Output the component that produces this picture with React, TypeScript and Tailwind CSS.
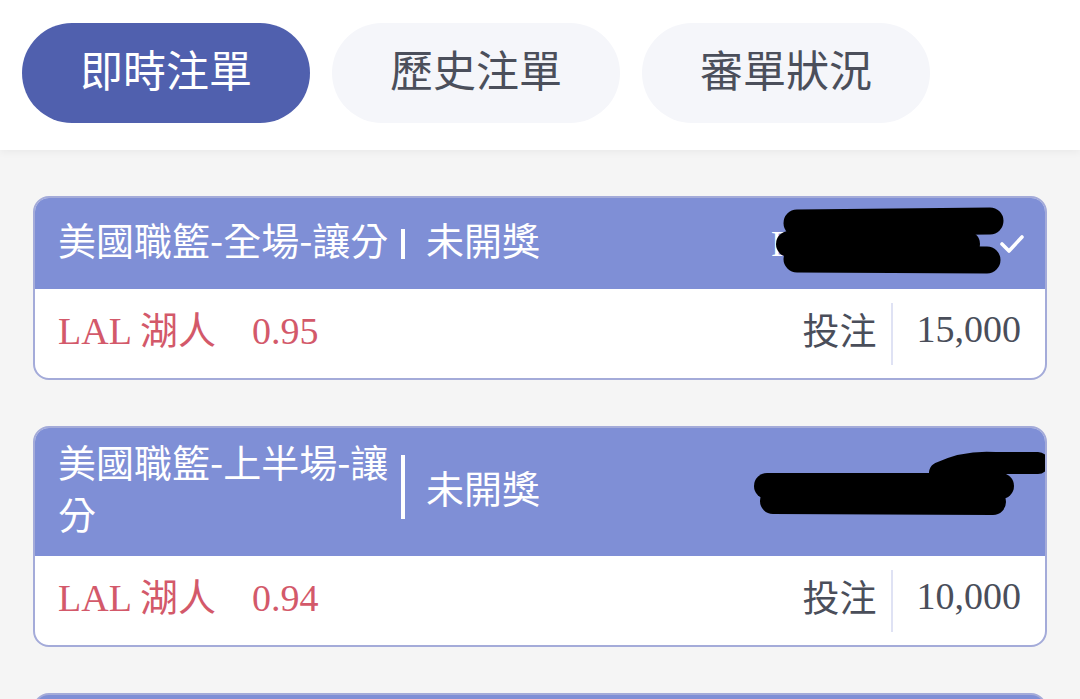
const sans = "font-['Noto_Sans_CJK_TC','Noto_Sans',sans-serif]";
const serif = "font-['Liberation_Serif','Noto_Sans_CJK_TC',serif]";

const tabs = [
  { label: "即時注單", active: true },
  { label: "歷史注單", active: false },
  { label: "審單狀況", active: false },
];

const Scribble = ({ strokes }: { strokes: { d: string; w: number }[] }) => (
  <svg className="absolute left-0 top-0 pointer-events-none" width="1013" height="230" viewBox="0 0 1013 230">
    {strokes.map((s, i) => (
      <path key={i} d={s.d} stroke="#000" strokeWidth={s.w} strokeLinecap="round" strokeLinejoin="round" fill="none" />
    ))}
  </svg>
);

const CheckMark = () => (
  <svg width="26" height="22" viewBox="0 0 26 22" fill="none">
    <path d="M 3 11 L 10 18 L 23 4" stroke="#fff" strokeWidth="3.6" strokeLinecap="round" strokeLinejoin="round" />
  </svg>
);

type Bet = {
  title: string;
  barClass: string;
  team: string;
  odds: string;
  stake: string;
  withCheck: boolean;
  strokes: { d: string; w: number }[];
};

const bets: Bet[] = [
  {
    title: "美國職籃-全場-讓分",
    barClass: "w-[4px] h-[30px] bg-white ml-[3px] mt-[10px]",
    team: "湖人",
    odds: "0.95",
    stake: "15,000",
    withCheck: true,
    strokes: [
      { d: "M 762 25 L 955 23", w: 27 },
      { d: "M 754 46 L 932 46", w: 26 },
      { d: "M 762 61 L 952 62", w: 27 },
    ],
  },
  {
    title: "美國職籃-上半場-讓分",
    barClass: "w-[4px] h-[64px] bg-white ml-[3px]",
    team: "湖人",
    odds: "0.94",
    stake: "10,000",
    withCheck: false,
    strokes: [
      { d: "M 732 58 L 966 58", w: 26 },
      { d: "M 738 73 L 958 74", w: 26 },
      { d: "M 905 45 Q 930 33 960 35 L 1003 35", w: 22 },
    ],
  },
];

const BetCard = ({ bet }: { bet: Bet }) => (
  <div className="relative mx-[33px] mb-[46px] rounded-[16px] border-2 border-[#a4abd9] bg-white overflow-hidden">
    <div className="flex items-center min-h-[91px] pt-[7px] pb-[17px] pl-[23px] pr-[20px] bg-[#7f8fd6] text-white">
      <div className={`w-[340px] text-[38px] leading-[52px] ${sans}`}>{bet.title}</div>
      <div className={bet.barClass} />
      <div className={`ml-[21px] text-[38px] leading-[52px] ${sans}`}>未開獎</div>
      {bet.withCheck && (
        <div className="ml-auto flex items-center mt-[10px]">
          <span className={`text-[36px] ${serif}`}>R</span>
          <span className="w-[204px]" />
          <CheckMark />
        </div>
      )}
    </div>
    <div className="flex items-center h-[89px] pb-[8px] pl-[23px] pr-[24px]">
      <div className={`text-[38px] text-[#d3596a] ${serif}`}>
        LAL <span className={sans}>{bet.team}</span>
        <span className="ml-[36px]">{bet.odds}</span>
      </div>
      <div className="ml-auto flex items-center">
        <span className={`text-[37px] text-[#4a4e5a] ${sans}`}>投注</span>
        <div className="ml-[14px] w-[2px] h-[62px] mt-[8px] bg-[#dfe2f4]" />
        <span className={`ml-[24px] text-[38px] text-[#4a4e5a] ${serif}`}>{bet.stake}</span>
      </div>
    </div>
    <Scribble strokes={bet.strokes} />
  </div>
);

export default function App() {
  return (
    <div className="w-[1080px] h-[699px] overflow-hidden bg-[#f5f5f5]">
      <div className="flex gap-[22px] h-[150px] items-start pt-[23px] px-[22px] bg-white shadow-[0_2px_8px_rgba(0,0,0,0.05)]">
        {tabs.map((t) => (
          <div
            key={t.label}
            className={`flex items-center justify-center w-[288px] h-[100px] pb-[10px] rounded-full text-[43px] ${sans} ${
              t.active ? "bg-[#5060ae] text-white" : "bg-[#f5f6fa] text-[#4b4f5b]"
            }`}
          >
            {t.label}
          </div>
        ))}
      </div>
      <div className="pt-[46px]">
        {bets.map((b) => (
          <BetCard key={b.stake} bet={b} />
        ))}
        <div className="mx-[33px] h-[120px] rounded-[16px] border-2 border-[#a4abd9] bg-[#7f8fd6]" />
      </div>
    </div>
  );
}
